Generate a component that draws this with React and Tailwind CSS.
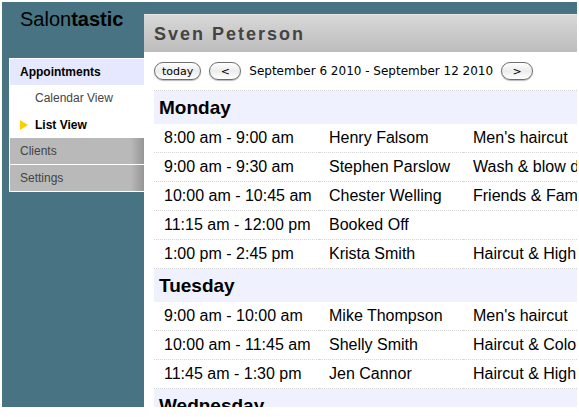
const week = [
  {
    day: "Monday",
    appointments: [
      { time: "8:00 am - 9:00 am", client: "Henry Falsom", service: "Men's haircut" },
      { time: "9:00 am - 9:30 am", client: "Stephen Parslow", service: "Wash & blow dry" },
      { time: "10:00 am - 10:45 am", client: "Chester Welling", service: "Friends & Family" },
      { time: "11:15 am - 12:00 pm", client: "Booked Off", service: "" },
      { time: "1:00 pm - 2:45 pm", client: "Krista Smith", service: "Haircut & Highlights" },
    ],
  },
  {
    day: "Tuesday",
    appointments: [
      { time: "9:00 am - 10:00 am", client: "Mike Thompson", service: "Men's haircut" },
      { time: "10:00 am - 11:45 am", client: "Shelly Smith", service: "Haircut & Colour" },
      { time: "11:45 am - 1:30 pm", client: "Jen Cannor", service: "Haircut & Highlights" },
    ],
  },
  { day: "Wednesday", appointments: [] },
]

function PillButton({ children, label }) {
  return (
    <button
      type="button"
      aria-label={label}
      className="flex h-[18px] min-w-8 items-center justify-center rounded-full border border-[#6e6e6e] bg-linear-to-b from-white via-[#ececec] to-white px-[7px] font-['DejaVu_Sans',sans-serif] text-[11px] leading-none text-black shadow-[0_1px_1px_#bbbbbb]"
    >
      {children}
    </button>
  )
}

function Sidebar() {
  return (
    <aside className="w-[142px] shrink-0 pl-[7px]">
      <div className="h-14 pt-1 pl-[11px] text-[20px] leading-[26px] text-black">
        Salon<b>tastic</b>
      </div>
      <nav className="border-t border-l border-white text-[12px] text-[#444444]">
        <a href="#appointments" className="block h-[26px] bg-[#e6e8ff] pl-[10px] leading-[26px] font-bold text-black">
          Appointments
        </a>
        <div className="bg-white">
          <a href="#calendar" className="block h-[27px] pl-[25px] leading-[27px]">
            Calendar View
          </a>
          <a href="#list" className="flex h-[26px] items-center gap-[7px] pl-[10px] font-bold text-black">
            <svg width="8" height="10" viewBox="0 0 8 10" aria-hidden="true">
              <path d="M0 0L8 5L0 10Z" fill="#ffcc00" />
            </svg>
            List View
          </a>
        </div>
        <a
          href="#clients"
          className="block h-[27px] border-b border-white bg-linear-to-r from-[#b9b9b9] from-90% to-[#969696] pl-[10px] leading-[26px]"
        >
          Clients
        </a>
        <a
          href="#settings"
          className="block h-[27px] border-b border-white bg-linear-to-r from-[#b9b9b9] from-90% to-[#969696] pl-[10px] leading-[26px]"
        >
          Settings
        </a>
      </nav>
    </aside>
  )
}

function Schedule() {
  return (
    <table className="w-full table-fixed border-separate border-spacing-0 text-left text-[16px] whitespace-nowrap text-black">
      <colgroup>
        <col className="w-[165px]" />
        <col className="w-36" />
        <col />
      </colgroup>
      {week.map(({ day, appointments }) => (
        <tbody key={day}>
          <tr>
            <th colSpan={3} scope="rowgroup" className="h-[33px] bg-[#f0f1ff] p-0 pl-[5px] text-[19px] leading-[33px] font-bold">
              {day}
            </th>
          </tr>
          {appointments.map((item) => (
            <tr key={item.time}>
              <td className="h-[29px] border-b border-dotted border-[#d4d4d4] p-0 pl-[10px] leading-7">{item.time}</td>
              <td className="border-b border-dotted border-[#d4d4d4] p-0 pl-[10px] leading-7">{item.client}</td>
              <td className="border-b border-dotted border-[#d4d4d4] p-0 pl-[10px] leading-7">{item.service}</td>
            </tr>
          ))}
        </tbody>
      ))}
    </table>
  )
}

export default function App() {
  return (
    <div className="h-screen bg-white px-[2px] pt-[2px] pb-[10px] font-['Liberation_Sans',Arial,sans-serif]">
      <div className="flex h-full overflow-hidden bg-[#477382]">
        <Sidebar />
        <main className="mt-3 min-w-0 flex-1 bg-white">
          <h1 className="h-[38px] border-t border-[#e6e6e6] bg-linear-to-b from-[#d8d8d8] to-[#bcbcbc] pl-[10px] text-[18px] leading-[38px] font-bold tracking-[2px] text-[#444444]">
            Sven Peterson
          </h1>
          <div className="pl-[10px]">
            <div className="flex h-[38px] items-center gap-2 text-[12px] text-black">
              <PillButton>today</PillButton>
              <PillButton label="Previous week">&lt;</PillButton>
              <span className="whitespace-nowrap font-['DejaVu_Sans',sans-serif]">
                September 6 2010 - September 12 2010
              </span>
              <PillButton label="Next week">&gt;</PillButton>
            </div>
            <div className="border-t border-dotted border-[#d4d4d4]">
              <Schedule />
            </div>
          </div>
        </main>
      </div>
    </div>
  )
}
